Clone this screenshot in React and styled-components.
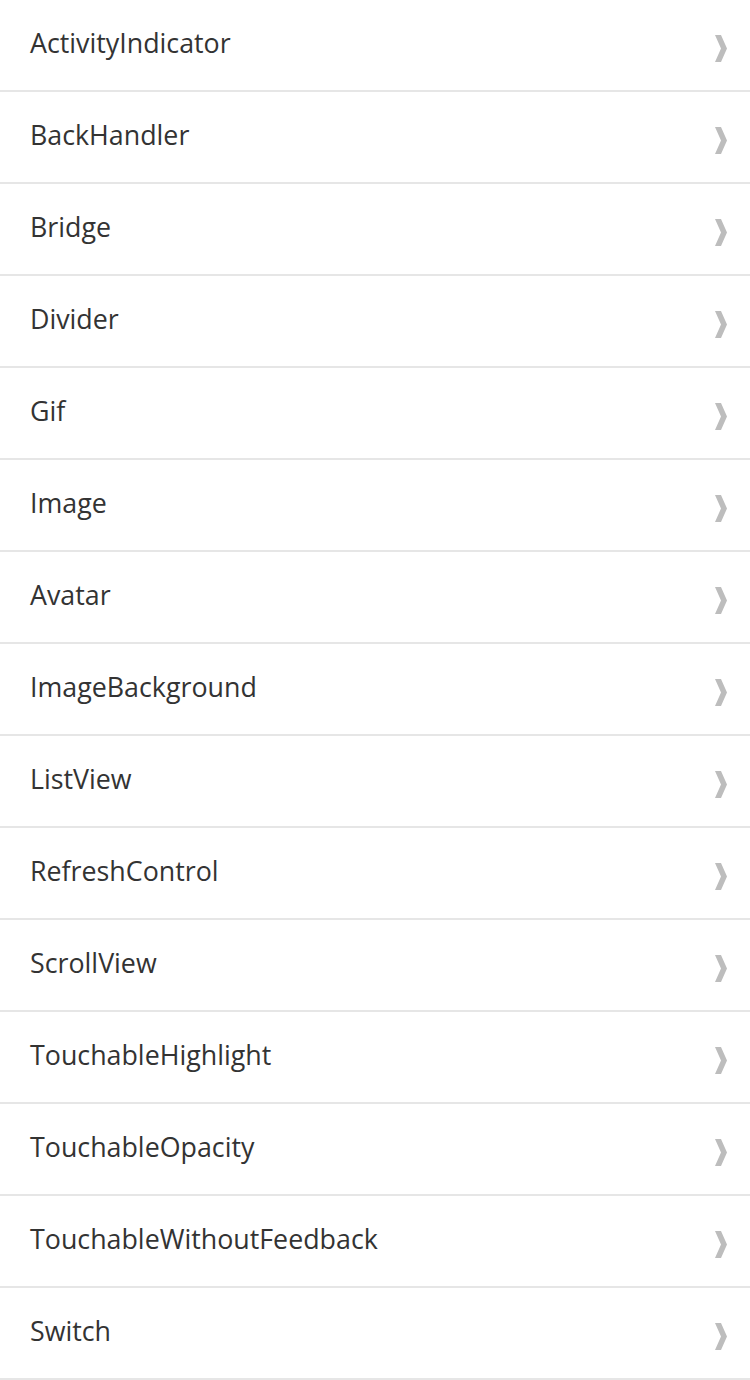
import styled, { createGlobalStyle } from 'styled-components';

const GlobalStyle = createGlobalStyle`
  html, body {
    margin: 0;
    padding: 0;
    background: #fff;
  }
  body {
    font-family: 'Open Sans', 'Noto Sans', sans-serif;
  }
`;

const items = [
  'ActivityIndicator',
  'BackHandler',
  'Bridge',
  'Divider',
  'Gif',
  'Image',
  'Avatar',
  'ImageBackground',
  'ListView',
  'RefreshControl',
  'ScrollView',
  'TouchableHighlight',
  'TouchableOpacity',
  'TouchableWithoutFeedback',
  'Switch',
];

const List = styled.ul`
  list-style: none;
  margin: 0;
  padding: 0;
  width: 750px;
`;

const Row = styled.li`
  display: flex;
  align-items: center;
  justify-content: space-between;
  height: 90px;
  padding: 0 22px 0 30px;
  border-bottom: 2px solid #e6e6e6;
`;

const Label = styled.span`
  font-size: 26.8px;
  color: #333;
  line-height: 1;
  margin-bottom: 3px;
`;

const Arrow = styled.svg`
  margin-top: 6px;
`;

const Chevron = () => (
  <Arrow width="14" height="28" viewBox="0 0 14 28">
    <polygon points="1,1 7,1 13,14.5 7,28 1,28 7,14.5" fill="#bdbdbd" />
  </Arrow>
);

const App = () => (
  <>
    <GlobalStyle />
    <List>
      {items.map((name) => (
        <Row key={name}>
          <Label>{name}</Label>
          <Chevron />
        </Row>
      ))}
    </List>
  </>
);

export default App;
